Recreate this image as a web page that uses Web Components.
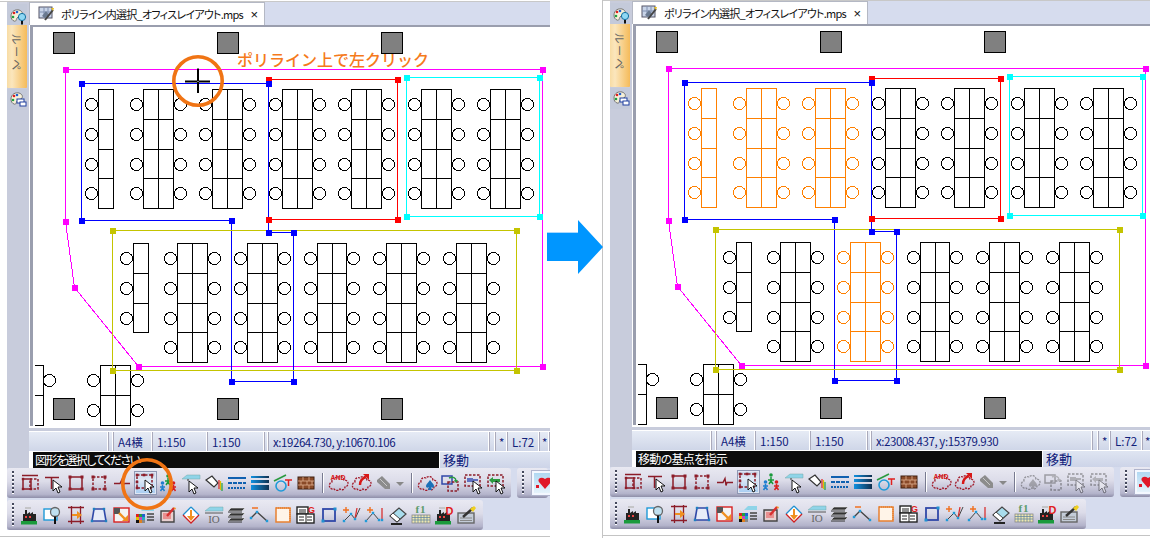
<!DOCTYPE html>
<html lang="ja">
<head>
<meta charset="utf-8">
<title>ポリライン内選択</title>
<style>
html, body { margin: 0; padding: 0; background: #fff; }
body { width: 1150px; height: 538px; overflow: hidden; display: flex; align-items: flex-start; font-family: "Noto Sans CJK JP", sans-serif; }
</style>
</head>
<body>
<cad-window tab="ポリライン内選択_オフィスレイアウト.mps" coords="x:19264.730, y:10670.106" prompt="図形を選択してください" style="width:550px;--prompt-ls:-1.6px">
  <cad-drawing slot="drawing"></cad-drawing>
  <ring-mark x="198" y="80.5" cross></ring-mark>
  <ring-mark x="147" y="484"></ring-mark>
  <note-label style="left:237px;top:49px">ポリライン上で左クリック</note-label>
</cad-window>
<step-arrow></step-arrow>
<cad-window tab="ポリライン内選択_オフィスレイアウト.mps" coords="x:23008.437, y:15379.930" prompt="移動の基点を指示" busy framed style="width:547px;margin-top:-1px;--prompt-ls:-.7px">
  <cad-drawing slot="drawing" orange="0,1,2,9"></cad-drawing>
</cad-window>

<script>
const DR = '#8c1c28';
const cur = (x, y) => `<path d="M${x} ${y}v11l3-3 2 5 2-1-2-5h4z" fill="#fff" stroke="#000" stroke-width=".9"/>`;
const dash = (x, y, w, h, c = DR) => `<rect x="${x}" y="${y}" width="${w}" height="${h}" fill="none" stroke="${c}" stroke-width="1.5" stroke-dasharray="2.5 1.5"/>`;
const box = (x, y, w, h, c = DR, sw = 1.5) => `<rect x="${x}" y="${y}" width="${w}" height="${h}" fill="none" stroke="${c}" stroke-width="${sw}"/>`;
const dots = (pts, c = DR, s = 2.4) => pts.map(([x, y]) => `<rect x="${x - s / 2}" y="${y - s / 2}" width="${s}" height="${s}" fill="${c}"/>`).join('');
const roof = '<path d="M1 6 6 2h13v4z" fill="#8fd4e8" stroke="#7aa" stroke-width=".5"/>';
const cloud = (c = '#a01828') => `<path d="M4 9a3.5 3.5 0 0 1 5-4 4 4 0 0 1 7 2 3.5 3.5 0 0 1 1 7 3 3 0 0 1-5 2 4 4 0 0 1-6 0 3.5 3.5 0 0 1-2-7z" fill="none" stroke="${c}" stroke-width="1.3" stroke-dasharray="2 1"/>`;
const factory = '<rect x="1" y="16" width="16" height="3.5" fill="#1a9a3c"/><path d="M3 16V9h2V5h2v4l3-2v2l3-2v2h3v7z" fill="#222"/><rect x="5" y="11" width="2" height="2" fill="#e44"/><rect x="9" y="11" width="2" height="2" fill="#e44"/><path d="M5 3h6" stroke="#bbb" stroke-width="1.5"/>';

const ICONS = {
  winDots: `<path d="M2 2.5h16" stroke="${DR}" stroke-width="1.5"/>` + box(3, 6, 8, 10) + dash(10, 6, 8, 10) + dots([[3, 6], [3, 16], [11, 16]]),
  pickLine: `<path d="M2 4.5h14M8.5 4.5V16" stroke="${DR}" stroke-width="1.5"/>` + cur(10, 7),
  square: box(4, 4, 12, 12) + dots([[4, 4], [16, 4], [4, 16], [16, 16]], DR, 3),
  dashSquare: dash(4, 4, 12, 12) + dots([[4, 4], [16, 4], [4, 16], [16, 16]], DR, 3),
  breakLine: `<path d="M2 10.5h6l2-4 1 7 1-3h6" fill="none" stroke="${DR}" stroke-width="1.4"/>`,
  dashPick: dash(2, 2, 15, 13) + dots([[2, 2], [17, 2], [2, 15], [9, 2], [2, 9]], DR, 2.6) + cur(10, 7),
  people: '<circle cx="10" cy="3" r="1.8" fill="#1a9a3c"/><path d="M10 5v5M7 8h6M10 9l-2 3M10 9l2 3" stroke="#1a9a3c" stroke-width="1.5"/><circle cx="4.5" cy="10" r="1.8" fill="#1f7fd0"/><path d="M4.500 12v4M2 14h5M4.500 15l-2 3M4.500 15l2 3" stroke="#1f7fd0" stroke-width="1.5"/><circle cx="15.500" cy="10" r="1.8" fill="#d82020"/><path d="M15.500 12v4M13 14h5M15.500 15l-2 3M15.500 15l2 3" stroke="#d82020" stroke-width="1.5"/>',
  roofPick: roof + `<path d="M7 6v2" stroke="#333"/>` + cur(8, 8),
  bucket: '<path d="M2 7 8 3l6 7-4 4z" fill="#fff" stroke="#333" stroke-width="1.2"/><path d="M15 7v9" stroke="#e02020" stroke-width="1.2"/><path d="M16.500 8v9" stroke="#e0c000" stroke-width="1.2"/><path d="M18 10v8" stroke="#20a040" stroke-width="1.200"/>',
  dashes: '<path d="M1 5h18" stroke="#1060b0" stroke-width="2"/><path d="M1 10h18" stroke="#1060b0" stroke-width="2" stroke-dasharray="4 1"/><path d="M1 15h18" stroke="#1060b0" stroke-width="2" stroke-dasharray="2 1"/>',
  weights: '<defs><linearGradient id="wg"><stop offset="0" stop-color="#1090e0"/><stop offset="1" stop-color="#103050"/></linearGradient></defs><rect x="1" y="3" width="18" height="2" fill="url(#wg)"/><rect x="1" y="7" width="18" height="3" fill="url(#wg)"/><rect x="1" y="12" width="18" height="5" fill="url(#wg)"/>',
  circleT: '<circle cx="8" cy="13" r="5" fill="none" stroke="#1f9ad8" stroke-width="1.6"/><path d="M1 8 13 2" stroke="#2a9a40" stroke-width="1.6"/><path d="M12 7h7M15.500 7v6" stroke="#e02020" stroke-width="1.500"/>',
  brick: '<rect x="2" y="4" width="16" height="12" fill="#8a4a28" stroke="#402010"/><path d="M2 8h16M2 12h16M7 4v4M13 4v4M5 8v4M11 8v4M16 8v4M7 12v4M13 12v4" stroke="#e0b090" stroke-width=".8"/>',
  andCloud: cloud() + '<text x="10" y="7" text-anchor="middle" font-family="Liberation Sans, sans-serif" font-weight="700" font-size="7" fill="#d81818">AND</text>',
  arrowCloud: cloud() + '<path d="M9 12 C9 7 12 5 15 4" fill="none" stroke="#d81818" stroke-width="2.400"/><path d="M12 1h6v6z" fill="#d81818"/>',
  grayArrow: '<path d="M3 7 8 3l8 8v5h-5L3 9z" fill="#8c8c8c"/><path d="M6 6l7 7" stroke="#c8c8c8"/>',
  spadeCloud: cloud() + '<path d="M13 7c-2 3-4 4-4 6s2 2 3 1l-1 3h4l-1-3c1 1 3 1 3-1s-2-3-4-6z" fill="#1a70b8"/>',
  swapBox: box(2, 3, 10, 8, '#3048a8') + dash(8, 9, 10, 9) + '<path d="M9 5c4-2 7 0 7 3" fill="none" stroke="#2a9a40" stroke-width="1.4"/><path d="M14 7h4l-2 3z" fill="#2a9a40"/>',
  offPick: dash(2, 2, 15, 11) + '<rect x="4" y="5" width="6" height="4" fill="#6070c0"/><path d="M10 7h5" stroke="#6070c0" stroke-width="2"/>' + cur(10, 8),
  backPick: dash(2, 2, 15, 11) + '<path d="M3 7l4-3v2h7v3H7v2z" fill="#2a9a40"/>' + cur(10, 8),
  factory: factory,
  lens: '<rect x="1" y="4" width="13" height="11" fill="#fff" stroke="#1f9ad8" stroke-width="1.4"/><circle cx="12" cy="7" r="4.500" fill="#bfe0f0" stroke="#666" stroke-width="1.300"/><path d="M12 11.500V19" stroke="#111" stroke-width="2"/>',
  gridArrow: `<path d="M2 2.500h16M2 16.500h16M5.500 1v18M14.500 1v18" stroke="${DR}" stroke-width="1.300"/>` + '<path d="M6 9h5V6l5 4-5 4v-3H6z" fill="#f09020"/>',
  trapezoid: '<path d="M5 4h10l2 12H3z" fill="#e8ecf8" stroke="#3048a8" stroke-width="1.600"/>' + dots([[5, 4], [15, 4], [3, 16], [17, 16]], '#2080c0', 2.400),
  redArrow: '<rect x="2" y="3" width="15" height="14" fill="#f4f4f4" stroke="#d82020" stroke-width="1.400"/><rect x="2" y="3" width="6" height="6" fill="#555"/><path d="M7 8l7 7" stroke="#f09020" stroke-width="2.400"/><path d="M16 10v6h-6z" fill="#f09020"/>',
  swatches: '<path d="M6 6l4-4h9v4z" fill="#8fd4e8"/><path d="M12 9h7M12 12h7M12 15h7" stroke="#444" stroke-width="1.300"/><rect x="1" y="9" width="3" height="3" fill="#e02020"/><rect x="4" y="9" width="3" height="3" fill="#20a040"/><rect x="7" y="9" width="3" height="3" fill="#2060d0"/><rect x="1" y="12" width="3" height="3" fill="#e0c000"/><rect x="4" y="12" width="3" height="3" fill="#d040c0"/><rect x="7" y="12" width="3" height="3" fill="#20b0c0"/><rect x="1" y="15" width="3" height="3" fill="#111"/><rect x="4" y="15" width="3" height="3" fill="#e08020"/><rect x="7" y="15" width="3" height="3" fill="#888"/>',
  penBox: '<path d="M3 6h13v11H3z" fill="#e8d0d0" stroke="#444" stroke-width="1.400"/><rect x="5" y="8" width="8" height="6" fill="#e89090"/><path d="M9 11 16 3" stroke="#d83030" stroke-width="2.400"/><path d="M15 2l3 1-1 2z" fill="#f09020"/>',
  diamond: '<path d="M10 2 18 10 10 18 2 10z" fill="#fff"/><path d="M10 2 18 10" stroke="#2090d0" stroke-width="1.300"/><path d="M2 10 10 2" stroke="#2090d0" stroke-width="1.300"/><path d="M2 10 10 18 18 10" fill="none" stroke="#d02020" stroke-width="1.300"/><path d="M9 5h2v6h3l-4 5-4-5h3z" fill="#f09020"/>',
  roofIO: roof + '<path d="M1 8h18" stroke="#555"/><text x="10" y="18" text-anchor="middle" font-family="Liberation Serif, serif" font-size="11" fill="#666">IO</text>',
  layers: '<path d="M4 3h14l-3 3H1zM4 8h14l-3 3H1zM4 13h14l-3 3H1z" fill="#333" stroke="#eee" stroke-width=".6"/><path d="M1 7h14M1 12h14M1 17h14" stroke="#333"/>',
  polyline: '<path d="M1 13 7 7l10 9" fill="none" stroke="#444" stroke-width="1.300"/><path d="M2 3h6" stroke="#f07020" stroke-width="1.500"/>' + dots([[1, 13], [7, 7], [17, 16]], '#1f9ad8', 2.400),
  dotSquare: '<rect x="3" y="3" width="14" height="14" fill="#fff4e8" stroke="#e88030" stroke-width="1.500"/><path d="M3 3h14v14" fill="none" stroke="#e88030" stroke-width="1.500" stroke-dasharray="1 1"/>',
  tableG: '<rect x="1" y="2" width="11" height="7" fill="#fff" stroke="#222" stroke-width="1.400"/><rect x="1" y="9" width="17" height="9" fill="#fff" stroke="#222" stroke-width="1.400"/><path d="M3 5h7M3 7h7M3 12h5M3 15h5M11 12h5M11 15h5M10 9v9" stroke="#222"/><text x="15.500" y="8" text-anchor="middle" font-family="Liberation Sans, sans-serif" font-weight="700" font-size="9" fill="#e02020">G</text>',
  blueSquare: box(4, 4, 12, 12, '#3048a8', 1.8) + dots([[16, 4], [4, 16]], '#2090d0', 3),
  polyPlusA: '<path d="M2 16 9 9l4 5 5-11" fill="none" stroke="#444" stroke-width="1"/><path d="M15 3 13 14" stroke="#d83030" stroke-width="1.300"/><path d="M1 5h6M4 2v6" stroke="#f07020" stroke-width="1.400"/>' + dots([[2, 16], [9, 9], [13, 14]], '#1f9ad8', 2.400),
  polyPlusB: '<path d="M1 16 8 8l6 7" fill="none" stroke="#444" stroke-width="1"/><path d="M17 3v12" stroke="#d83030" stroke-width="1.300"/><path d="M2 5h6M5 2v6" stroke="#f07020" stroke-width="1.400"/>' + dots([[1, 16], [8, 8], [14, 15], [17, 15]], '#1f9ad8', 2.400),
  eraser: '<path d="M2 11 11 3l7 6-9 8z" fill="#a8dcec" stroke="#444" stroke-width="1.200"/><path d="M2 11l7 6 3-3-7-6z" fill="#fff" stroke="#444" stroke-width="1"/><path d="M3 19h11" stroke="#222" stroke-width="2"/>',
  keyF1: '<text x="10" y="8" text-anchor="middle" font-family="Liberation Serif, serif" font-weight="700" font-size="11" letter-spacing="1" fill="#5a9a6a">f1</text><rect x="1" y="10" width="18" height="8" fill="#f0e8b0" stroke="#888" stroke-width=".8"/><path d="M1 12.500h18M1 15h18M4 10v8M7 10v8M10 10v8M13 10v8M16 10v8" stroke="#5a80a0" stroke-width=".7"/>',
  factoryD: factory + '<text x="15.500" y="10" text-anchor="middle" font-family="Liberation Sans, sans-serif" font-weight="700" font-size="11" fill="#e02020">D</text>',
  noteEdit: '<rect x="1" y="8" width="16" height="10" fill="#c4ccd8" stroke="#666" stroke-width="1.400"/><path d="M3 13h12M3 15.500h12" stroke="#888"/><path d="M6 12 16 3" stroke="#333" stroke-width="2.400"/><path d="M13 4l4-3 2 2-3 4z" fill="#f0d020"/>'
};

const ROW_ONE = ['winDots', 'pickLine', 'square', 'dashSquare', 'breakLine', 'dashPick', 'people', 'roofPick', 'bucket', 'dashes', 'weights', 'circleT', 'brick', '|', 'andCloud', 'arrowCloud', 'grayArrow', 'v', '|', 'spadeCloud', 'swapBox', 'offPick', 'backPick'];
const ROW_TWO = ['factory', 'lens', 'gridArrow', 'trapezoid', 'redArrow', 'swatches', 'penBox', 'diamond', 'roofIO', 'layers', 'polyline', 'dotSquare', 'tableG', 'blueSquare', 'polyPlusA', 'polyPlusB', 'eraser', 'keyF1', 'factoryD', 'noteEdit'];

class ToolBtn extends HTMLElement {
    connectedCallback() {
        const shadow = this.attachShadow({ mode: 'open' });
        shadow.innerHTML = `
            <style>
                :host { display: flex; align-items: center; justify-content: center; width: 23px; height: 24px; box-sizing: border-box; flex: none; }
                :host([active]) { background: linear-gradient(#c4cfe4, #dfe9f6 35%, #a6ccf2); border: 1px solid #8e98b4; box-shadow: inset 0 0 0 1px #dfe6f4; }
                :host([off]) svg { filter: grayscale(1) opacity(.45); }
                svg { display: block; width: 20px; height: 20px; overflow: visible; }
            </style>
            <svg viewBox="0 0 20 20">${ICONS[this.getAttribute('icon')] || ''}</svg>`;
    }
}
customElements.define('tool-btn', ToolBtn);

class ToolBar extends HTMLElement {
    connectedCallback() {
        const shadow = this.attachShadow({ mode: 'open' });
        shadow.innerHTML = `
            <style>
                :host { display: flex; align-items: center; height: 30px; box-sizing: border-box; padding-left: 5px; border-radius: 3px; background: linear-gradient(#e9e9f2, #dcdce9 45%, #b4b4cb 88%, #8e8ea8); flex: none; }
                .grip { width: 2px; height: 24px; margin-right: 4.5px; flex: none; background: repeating-linear-gradient(#44485c 0 2px, #fff 2px 3px, transparent 3px 4px); }
            </style>
            <div class="grip"></div><slot></slot>`;
    }
}
customElements.define('tool-bar', ToolBar);

class CadWindow extends HTMLElement {
    connectedCallback() {
        const busy = this.hasAttribute('busy');
        const shadow = this.attachShadow({ mode: 'open' });
        const btn = (name, i) => {
            if (name === '|') return '<i class="sep"></i>';
            if (name === 'v') return '<i class="drop"></i>';
            const off = name === 'grayArrow' ? '' : (busy && i > 18 ? 'off' : '');
            const on = name === 'dashPick' ? 'active' : '';
            return `<tool-btn icon="${name}" ${off} ${on}></tool-btn>`;
        };
        shadow.innerHTML = `
            <style>
                :host { display: block; position: relative; flex: none; height: 539px; overflow: hidden; background: #fff; color: #10207a; font: 12px "Noto Sans CJK JP", sans-serif; font-feature-settings: "palt"; }
                :host([framed]) { box-shadow: -1px 0 0 #c4c4c4; overflow: visible; clip-path: inset(-1px 0 0 -1px); }
                .grid { display: grid; grid-template-columns: 7px 22px 1fr; grid-template-rows: 2px 23px 406px 20px 17px 62px 6px 1px; height: 100%; }
                .rule { grid-column: 1 / -1; background: #c8c8c8; height: 1px; align-self: end; }
                .rail { grid-column: 2; grid-row: 2 / 6; background: #c8ccdc; display: flex; flex-direction: column; }
                .rail i { display: block; height: 20px; margin-right: 2px; background: #c4cada; }
                .rail svg { display: block; margin: 3px 0 0 2px; }
                .tabv { height: 63px; margin-right: 2px; box-sizing: border-box; padding-top: 9px; background: linear-gradient(90deg, #f8dca4, #fbe6bd 25%, #f5bb5a); color: #666; font-size: 11px; writing-mode: vertical-rl; text-orientation: sideways; display: flex; align-items: center; letter-spacing: 2px; border-radius: 0 0 1px 1px; }
                .shelf { grid-column: 3; grid-row: 2; background: #d6dcee; display: flex; }
                .tab { width: 236px; box-sizing: border-box; display: flex; align-items: center; gap: 7px; padding-left: 8px; background: #fff; border: 1px solid #b4b8c4; border-bottom: 0; color: #111; white-space: nowrap; }
                .tab svg { flex: none; }
                .tab b { font-weight: 400; font-size: 11px; letter-spacing: -.75px; flex: 1; }
                .tab u { text-decoration: none; font: 13px "Liberation Sans", sans-serif; margin-right: 6px; }
                .frame { grid-column: 3; grid-row: 3; box-sizing: border-box; border-left: 1px solid #fff; background: #fff; padding-bottom: 5px; position: relative; }
                .frame::after { content: ""; position: absolute; left: -1px; right: 0; bottom: 0; height: 3px; background: #c8ccdc; }
                .view { height: 100%; box-sizing: border-box; border-left: 3px solid #9a9eae; border-top: 2px solid #9a9eae; overflow: hidden; }
                .status { grid-column: 3; grid-row: 4; display: flex; align-items: center; font-size: 11.5px; background: linear-gradient(#e6ebf5, #cfd6e8); white-space: nowrap; overflow: hidden; margin-top: 1px; }
                .status span { box-sizing: border-box; height: 100%; display: flex; align-items: center; border-right: 1px solid #fff; box-shadow: 1px 0 0 #aab; padding-left: 5px; flex: none; }
                .status .xy { letter-spacing: -.43px; }
                .cmd { grid-column: 3; grid-row: 5; display: flex; height: 16px; margin-top: 1px; align-self: start; }
                .prompt { width: 406px; margin-left: 4px; box-sizing: border-box; padding-left: 2px; background: #0c0c0c; color: #fff; line-height: 16px; letter-spacing: var(--prompt-ls, 0); }
                .mode { flex: 1; box-sizing: border-box; padding-left: 3px; margin-left: 1px; background: linear-gradient(#dfe5f2, #cdd4e8); line-height: 16px; font-size: 13px; }
                .tools { grid-column: 1 / -1; grid-row: 6; margin-left: 7px; display: flex; flex-direction: column; gap: 2px; background: #d6dcee; }
                .line { display: flex; gap: 6px; }
                .sep { display: block; width: 8.5px; height: 24px; flex: none; position: relative; }
                .sep::after { content: ""; position: absolute; left: 4px; top: 2px; bottom: 2px; width: 1px; background: #777a90; box-shadow: 1px 0 0 #fff; }
                .drop { display: block; width: 11.5px; height: 24px; flex: none; position: relative; }
                .drop::after { content: ""; position: absolute; left: 1px; top: 11px; border: 4px solid transparent; border-top: 4px solid #888; }
                .heart { width: 23px; height: 24px; margin-left: 3px; box-sizing: border-box; border: 2px solid #f4f8ff; outline: 1px solid #b0b4cc; background: linear-gradient(#b0d8f2, #e6f3fb); flex: none; }
                .foot { grid-column: 1 / -1; grid-row: 8; background: #c4c4c4; }
                .over { position: absolute; inset: 0; pointer-events: none; }
            </style>
            <div class="grid">
                <div class="rule"></div>
                <div class="rail">
                    <i style="height:21px;margin-top:2px"><svg width="18" height="18" viewBox="0 0 18 18">
                        <path d="M2 9c0-5 5-7 8-6s4 3 3 5-4 1-5 3-1 4-3 3-3-2-3-5z" fill="#f6f0d8" stroke="#777"/><circle cx="5" cy="6" r="1.300" fill="#e02020"/><circle cx="8" cy="5" r="1.300" fill="#2060d0"/><circle cx="4" cy="10" r="1.300" fill="#20a040"/><circle cx="13" cy="10" r="3.600" fill="#8fd8f4" stroke="#1070a0"/><path d="M13 14v3.500" stroke="#111" stroke-width="2"/></svg></i>
                    <div class="tabv">ルーペ</div>
                    <i style="height:21px;margin-top:1px"><svg width="18" height="18" viewBox="0 0 18 18" style="margin-top:1px">
                        <path d="M2 9c0-5 5-7 8-6s4 3 3 5-4 1-5 3-1 4-3 3-3-2-3-5z" fill="#f6f0d8" stroke="#777"/><circle cx="5" cy="6" r="1.300" fill="#e02020"/><circle cx="8" cy="5" r="1.300" fill="#2060d0"/><circle cx="4" cy="10" r="1.300" fill="#20a040"/><rect x="8" y="9" width="7" height="4" fill="#fff" stroke="#2040a0"/><rect x="11" y="12" width="6" height="4" fill="#fff" stroke="#2040a0"/></svg></i>
                </div>
                <div class="shelf"><div class="tab">
                    <svg width="16" height="16" viewBox="0 0 16 16"><rect x="1" y="1" width="13" height="11" fill="#c8d4e8" stroke="#556"/><path d="M1 6h13M6 1v11M10 1v11" stroke="#8090b0"/><path d="M4 10 8 5l3 4-4 3z" fill="#6a7a90"/><path d="M7 14 15 4" stroke="#444" stroke-width="2"/><path d="M13 2l3 0-1 3z" fill="#e8c020"/></svg>
                    <b>${this.getAttribute('tab')}</b><u>×</u></div></div>
                <div class="frame"><div class="view"><slot name="drawing"></slot></div></div>
                <div class="status">
                    <span style="width:79px"></span><span style="width:5px;padding:0"></span>
                    <span style="width:39px">A4横</span><span style="width:55px">1:150</span><span style="width:57px">1:150</span>
                    <span style="width:4px;padding:0"></span><span class="xy" style="width:221px">${this.getAttribute('coords')}</span>
                    <span style="width:6px;padding:0"></span><span style="width:12px;padding-left:4px">*</span><span style="width:32px">L:72</span><span style="width:10px;padding-left:3px">*</span>
                </div>
                <div class="cmd"><div class="prompt">${this.getAttribute('prompt')}</div><div class="mode">移動</div></div>
                <div class="tools">
                    <div class="line">
                        <tool-bar style="width:504px">${ROW_ONE.map(btn).join('')}</tool-bar>
                        <tool-bar style="width:31px"><div class="heart"><svg width="19" height="20" viewBox="0 0 19 20"><path d="M11 16 5 9c-2-3 2-6 6-3 4-3 8 0 6 3z" fill="#e01828"/><rect x="2" y="12" width="3" height="3" fill="#e01828"/></svg></div></tool-bar>
                    </div>
                    <div class="line"><tool-bar style="width:476px">${ROW_TWO.map(n => `<tool-btn icon="${n}"></tool-btn>`).join('')}</tool-bar></div>
                </div>
                <div class="foot"></div>
            </div>
            <div class="over"><slot></slot></div>`;
    }
}
customElements.define('cad-window', CadWindow);

// чертеж: координаты в системе окна
const TABLES = [
    [98.5, 89.5, 15, 4, 1, 1, 0], [143.5, 89.5, 30, 4, 2, 1, 1], [212.5, 89.5, 30, 4, 2, 1, 1],
    [282.5, 89.5, 30, 4, 2, 1, 1], [351.5, 89.5, 30, 4, 2, 1, 1], [421.5, 89.5, 30, 4, 2, 1, 1], [490.5, 89.5, 30, 4, 2, 1, 1],
    [133.5, 243.5, 15, 3, 1, 1, 0], [177.5, 243.5, 30, 4, 2, 1, 1], [247.5, 243.5, 30, 4, 2, 1, 1],
    [317.5, 243.5, 29, 4, 2, 1, 1], [386.5, 243.5, 30, 4, 2, 1, 1], [456.5, 243.5, 30, 4, 2, 1, 1]
];
const ROW_DY = [0, 30, 60, 89, 119];
const SHAPES = [
    { c: '#ff00ff', p: [[65.5, 69.5], [542.5, 69.5], [542.5, 366.5], [138.5, 366.5], [74.5, 287.5], [65.5, 221.5]] },
    { c: '#ff0000', p: [[268.5, 79.5], [397.5, 79.5], [397.5, 219.5], [268.5, 219.5]] },
    { c: '#0000ff', p: [[81.5, 83.5], [268.5, 83.5], [268.5, 232.5], [293.5, 232.5], [293.5, 381.5], [231.5, 381.5], [231.5, 220.5], [81.5, 220.5]] },
    { c: '#00ffff', p: [[406.5, 77.5], [539.5, 77.5], [539.5, 216.5], [406.5, 216.5]] },
    { c: '#c4c400', p: [[112.5, 230.5], [516.5, 230.5], [516.5, 370.5], [112.5, 370.5]] }
];

class CadDrawing extends HTMLElement {
    connectedCallback() {
        const orange = (this.getAttribute('orange') || '').split(',').filter(Boolean).map(Number);
        const shadow = this.attachShadow({ mode: 'open' });
        const o = [];
        for (const [x, y] of [[53.5, 32.5], [217.5, 32.5], [381.5, 32.5], [53.5, 398.5], [217.5, 398.5], [381.5, 398.5]]) {
            o.push(`<rect x="${x}" y="${y}" width="21" height="21" fill="#808080" stroke="#000"/>`);
        }
        TABLES.forEach(([x, y, w, rows, cols, left, right], i) => {
            o.push(this.table(x, y, w, rows, cols, left, right, orange.includes(i) ? '#ff8000' : '#000'));
        });
        // нижние столы, у левого край срезан окном
        o.push('<path d="M35 365.500h8v60h-8M35 395.500h8" fill="none" stroke="#000"/><circle cx="49.500" cy="380.500" r="6" fill="none" stroke="#000"/>');
        for (const cy of [380.5, 410.5]) {
            o.push(`<circle cx="93.500" cy="${cy}" r="6" fill="none" stroke="#000"/><circle cx="137.500" cy="${cy}" r="6" fill="none" stroke="#000"/>`);
        }
        o.push('<path d="M100.500 365.500h30v60h-30zM115.500 365.500v60M100.500 395.500h30" fill="none" stroke="#000"/>');
        for (const s of SHAPES) {
            o.push(`<polygon points="${s.p.join(' ')}" fill="none" stroke="${s.c}"/>`);
        }
        for (const s of SHAPES) {
            for (const [x, y] of s.p) {
                o.push(`<rect x="${x - 2.5}" y="${y - 2.5}" width="6" height="6" fill="${s.c}"/>`);
            }
        }
        shadow.innerHTML = `
            <style>
                :host { display: block; width: 100%; height: 100%; background: #fff; }
                svg { display: block; shape-rendering: crispEdges; }
            </style>
            <svg width="520" height="404" viewBox="33 27 520 404">${o.join('')}</svg>`;
    }

    table(x, y, w, rows, cols, left, right, color) {
        const h = ROW_DY[rows];
        let d = `M${x} ${y}h${w}v${h}h${-w}z`;
        for (let r = 1; r < rows; r++) d += `M${x} ${y + ROW_DY[r]}h${w}`;
        if (cols === 2) d += `M${x + 15} ${y}v${h}`;
        let out = `<path d="${d}" fill="none" stroke="${color}"/>`;
        for (let r = 0; r < rows; r++) {
            const cy = y + 15 + ROW_DY[r];
            if (left) out += `<circle cx="${x - 7}" cy="${cy}" r="6" fill="none" stroke="${color}"/>`;
            if (right) out += `<circle cx="${x + w + 7}" cy="${cy}" r="6" fill="none" stroke="${color}"/>`;
        }
        return out;
    }
}
customElements.define('cad-drawing', CadDrawing);

class RingMark extends HTMLElement {
    connectedCallback() {
        const x = +this.getAttribute('x'), y = +this.getAttribute('y');
        const cross = this.hasAttribute('cross') ? '<path d="M1 27.500h25M14 14.500V39" stroke="#000" stroke-width="2"/><rect x="13.500" y="27" width="1" height="1" fill="#fff"/>' : '';
        const shadow = this.attachShadow({ mode: 'open' });
        shadow.innerHTML = `
            <style>
                :host { position: absolute; left: ${x - 27}px; top: ${y - 27}px; width: 54px; height: 54px; }
                svg { display: block; }
            </style>
            <svg width="54" height="54" viewBox="0 0 54 54"><circle cx="27" cy="27" r="24.200" fill="none" stroke="#f07414" stroke-width="3.600"/><g transform="translate(13 0)">${cross}</g></svg>`;
    }
}
customElements.define('ring-mark', RingMark);

class NoteLabel extends HTMLElement {
    connectedCallback() {
        const shadow = this.attachShadow({ mode: 'open' });
        shadow.innerHTML = `
            <style>
                :host { position: absolute; white-space: nowrap; color: #f57a1c; font-size: 16px; font-weight: 500; line-height: 20px; font-feature-settings: normal; }
            </style>
            <slot></slot>`;
    }
}
customElements.define('note-label', NoteLabel);

class StepArrow extends HTMLElement {
    connectedCallback() {
        const shadow = this.attachShadow({ mode: 'open' });
        shadow.innerHTML = `
            <style>
                :host { display: block; flex: none; width: 56px; margin-left: -3px; height: 538px; position: relative; z-index: 2; }
                svg { display: block; margin-top: 219px; }
            </style>
            <svg width="56" height="56" viewBox="0 0 56 56"><path d="M0 13.500h31V1l25 27-25 27V42H0z" fill="#0096ff"/><path d="M0 13.500h31" stroke="#a8d8ff"/></svg>`;
    }
}
customElements.define('step-arrow', StepArrow);
</script>
</body>
</html>
